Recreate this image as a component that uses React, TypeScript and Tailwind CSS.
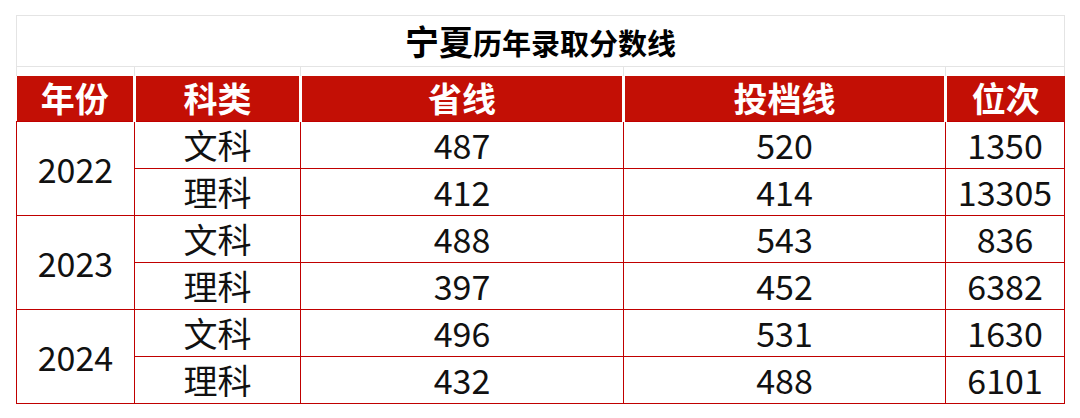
const rows = [
  { year: '2022', items: [['文科', '487', '520', '1350'], ['理科', '412', '414', '13305']] },
  { year: '2023', items: [['文科', '488', '543', '836'], ['理科', '397', '452', '6382']] },
  { year: '2024', items: [['文科', '496', '531', '1630'], ['理科', '432', '488', '6101']] },
];

const headers = ['年份', '科类', '省线', '投档线', '位次'];

export default function App() {
  return (
    <div
      className="w-[1080px] h-[418px] bg-white pt-[15px] pl-[16px]"
      style={{ fontFamily: '"Noto Sans CJK SC", "Noto Sans", sans-serif' }}
    >
      <table className="w-[1048px] table-fixed border-collapse text-[34px] leading-none text-[#111]">
        <colgroup>
          <col className="w-[118px]" />
          <col className="w-[166px]" />
          <col className="w-[323px]" />
          <col className="w-[322px]" />
          <col className="w-[119px]" />
        </colgroup>
        <thead>
          <tr>
            <th colSpan={5} className="h-[51px] border border-[#e4e4e4] font-bold text-black">
              <span className="text-[34px]">宁夏</span>
              <span className="text-[29px]">历年录取分数线</span>
            </th>
          </tr>
          <tr className="h-[9px]">
            {headers.map((h) => (
              <td key={h} className="border-x border-[#e4e4e4] p-0" />
            ))}
          </tr>
          <tr className="h-[46px] bg-[#c30f05]">
            {headers.map((h) => (
              <th
                key={h}
                className="border-x-[3px] border-white font-bold text-white first:border-l-0 last:border-r-0"
              >
                {h}
              </th>
            ))}
          </tr>
        </thead>
        <tbody>
          {rows.map((group) =>
            group.items.map((item, i) => (
              <tr key={group.year + item[0]} className="h-[47px]">
                {i === 0 && (
                  <td rowSpan={2} className="border border-[#c00000] text-center">
                    {group.year}
                  </td>
                )}
                {item.map((cell, j) => (
                  <td key={j} className="border border-[#c00000] text-center">
                    {cell}
                  </td>
                ))}
              </tr>
            ))
          )}
        </tbody>
      </table>
    </div>
  );
}
